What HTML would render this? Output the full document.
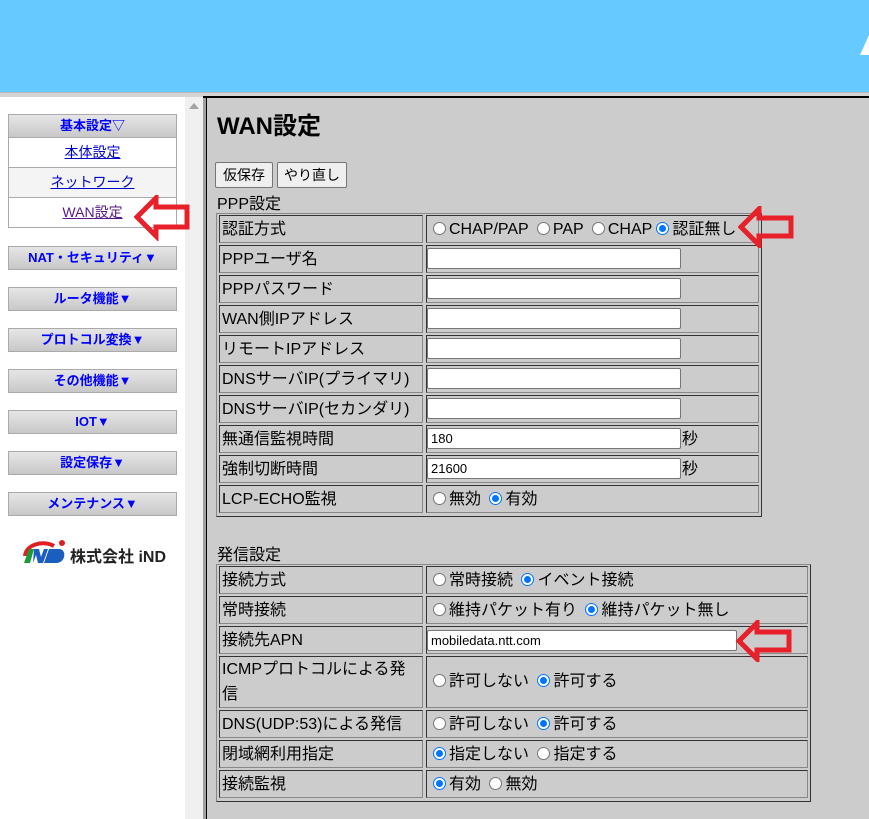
<!DOCTYPE html>
<html><head><meta charset="utf-8">
<style>
*{margin:0;padding:0;box-sizing:border-box}
body{width:869px;height:819px;overflow:hidden;position:relative;background:#ccc;font-family:"Liberation Sans","Noto Sans CJK JP",sans-serif;font-size:16px;color:#000}
.a{position:absolute}
#ban{left:0;top:0;width:869px;height:92px;background:#66c9ff}
#sep{left:0;top:92px;width:869px;height:5px;background:#d4d4d4;border-top:1px solid #bbb}
#left{left:0;top:97px;width:185px;height:722px;background:#fff}
#sb{left:185px;top:97px;width:18px;height:722px;background:#f0f0f0}
#fb{left:203px;top:97px;width:4px;height:722px;background:#a0a0a0;border-right:1px solid #000}
#topline{left:203px;top:96px;width:666px;height:2px;background:#000}
.mh{position:absolute;left:8px;width:169px;height:24px;background:linear-gradient(#e6e6e6,#c8c8c8);border:1px solid #aaa;color:#00f;font-weight:bold;font-size:13px;text-align:center;line-height:22px}
.mi{position:absolute;left:8px;width:169px;height:30px;border:1px solid #aaa;border-top:none;text-align:center;line-height:29px;font-size:14px;color:#00c;text-decoration:underline}
.cl,.cv{position:absolute;border:1px solid;border-color:#333 #888 #888 #333;height:28px;line-height:27px;padding-left:2px;white-space:nowrap}
.cl{left:219px;width:204px}
.cv{left:426px}
.tb{position:absolute;border:1px solid;border-color:#888 #333 #333 #888}
.r{display:inline-block;width:13px;height:13px;border-radius:50%;border:1px solid #767676;background:#fff;vertical-align:-1px;margin:0 3px 0 4px;position:relative}
.r.on{border:1px solid #0075ff;background:#fff}
.r.on:after{content:"";position:absolute;left:2px;top:2px;width:7px;height:7px;border-radius:50%;background:#0075ff}
.in{position:absolute;height:21px;background:#fff;border:1px solid #767676;border-radius:2px;font-size:13px;line-height:19px;padding-left:3px}
.btn{position:absolute;top:162px;height:26px;background:#efefef;border:1px solid #767676;border-radius:2px;font-size:14px;line-height:24px;text-align:center}
</style></head><body>
<div id="ban" class="a"></div>
<svg class="a" style="left:858px;top:35px" width="11" height="22"><polygon points="11,0 11,20 2,20" fill="#fff"/></svg>
<div id="sep" class="a"></div>
<div id="left" class="a"></div>
<div id="sb" class="a"></div>
<svg class="a" style="left:189px;top:103px" width="10" height="6"><polygon points="5,0 10,6 0,6" fill="#a3a3a3"/></svg>
<div id="fb" class="a"></div>
<div id="topline" class="a"></div>

<div class="mh" style="top:114px">基本設定▽</div>
<div class="mi" style="top:138px">本体設定</div>
<div class="mi" style="top:168px;background:#f4f4f4">ネットワーク</div>
<div class="mi" style="top:198px;color:#551a8b">WAN設定</div>
<div class="mh" style="top:246px">NAT・セキュリティ▼</div>
<div class="mh" style="top:287px">ルータ機能▼</div>
<div class="mh" style="top:328px">プロトコル変換▼</div>
<div class="mh" style="top:369px">その他機能▼</div>
<div class="mh" style="top:410px">IOT▼</div>
<div class="mh" style="top:451px">設定保存▼</div>
<div class="mh" style="top:492px">メンテナンス▼</div>

<svg class="a" style="left:22px;top:538px" width="46" height="26">
<path d="M3 18 C4 6 22 2 32 8" stroke="#e02020" stroke-width="4" fill="none"/>
<circle cx="40" cy="5" r="3" fill="#e02020"/>
<path d="M2 25 L7 11 L12 11 L8 25Z" fill="#1a9a3a"/>
<path d="M12 11 L17 11 L19 19 L22 11 L26 11 L21 25 L16 25 L14 17 L11 25Z" fill="#1a5ec0"/>
<path d="M27 11 L37 11 C45 11 44 25 34 25 L22 25Z" fill="#1a5ec0"/>
</svg>
<div class="a" style="left:70px;top:543px;font-size:16px;font-weight:bold;color:#222">株式会社 iND</div>

<svg class="a" style="left:134px;top:195px" width="58" height="46"><path d="M3 22 L22 3 L22 12 L53 12 L53 32 L22 32 L22 41Z" fill="none" stroke="#e8202a" stroke-width="5"/></svg>

<div class="a" style="left:217px;top:106px;font-size:24px;font-weight:bold">WAN設定</div>
<div class="btn" style="left:215px;width:58px">仮保存</div>
<div class="btn" style="left:277px;width:70px">やり直し</div>
<div class="a" style="left:217px;top:190px">PPP設定</div>

<div class="tb" style="left:216px;top:213px;width:546px;height:304px"></div>
<div class="cl" style="top:215px">認証方式</div><div class="cv" style="top:215px;width:333px"><span class="r"></span>CHAP/PAP <span class="r"></span>PAP <span class="r"></span>CHAP<span class="r on"></span>認証無し</div>
<div class="cl" style="top:245px">PPPユーザ名</div><div class="cv" style="top:245px;width:333px"></div><div class="in" style="left:427px;top:248px;width:254px"></div>
<div class="cl" style="top:275px">PPPパスワード</div><div class="cv" style="top:275px;width:333px"></div><div class="in" style="left:427px;top:278px;width:254px"></div>
<div class="cl" style="top:305px">WAN側IPアドレス</div><div class="cv" style="top:305px;width:333px"></div><div class="in" style="left:427px;top:308px;width:254px"></div>
<div class="cl" style="top:335px">リモートIPアドレス</div><div class="cv" style="top:335px;width:333px"></div><div class="in" style="left:427px;top:338px;width:254px"></div>
<div class="cl" style="top:365px">DNSサーバIP(プライマリ)</div><div class="cv" style="top:365px;width:333px"></div><div class="in" style="left:427px;top:368px;width:254px"></div>
<div class="cl" style="top:395px">DNSサーバIP(セカンダリ)</div><div class="cv" style="top:395px;width:333px"></div><div class="in" style="left:427px;top:398px;width:254px"></div>
<div class="cl" style="top:425px">無通信監視時間</div><div class="cv" style="top:425px;width:333px;padding-left:255px">秒</div><div class="in" style="left:427px;top:428px;width:254px">180</div>
<div class="cl" style="top:455px">強制切断時間</div><div class="cv" style="top:455px;width:333px;padding-left:255px">秒</div><div class="in" style="left:427px;top:458px;width:254px">21600</div>
<div class="cl" style="top:485px">LCP-ECHO監視</div><div class="cv" style="top:485px;width:333px"><span class="r"></span>無効 <span class="r on"></span>有効</div>

<svg class="a" style="left:738px;top:206px" width="58" height="42"><path d="M3 21 L21 3 L21 12 L53 12 L53 30 L21 30 L21 39Z" fill="none" stroke="#e8202a" stroke-width="5"/></svg>

<div class="a" style="left:217px;top:541px">発信設定</div>
<div class="tb" style="left:216px;top:564px;width:595px;height:238px"></div>
<div class="cl" style="top:566px">接続方式</div><div class="cv" style="top:566px;width:382px"><span class="r"></span>常時接続 <span class="r on"></span>イベント接続</div>
<div class="cl" style="top:596px">常時接続</div><div class="cv" style="top:596px;width:382px"><span class="r"></span>維持パケット有り <span class="r on"></span>維持パケット無し</div>
<div class="cl" style="top:626px">接続先APN</div><div class="cv" style="top:626px;width:382px"></div><div class="in" style="left:427px;top:630px;width:310px">mobiledata.ntt.com</div>
<div class="cl" style="top:656px;height:52px;line-height:25px">ICMPプロトコルによる発<br>信</div><div class="cv" style="top:656px;width:382px;height:52px;line-height:50px"><span class="r"></span>許可しない <span class="r on"></span>許可する</div>
<div class="cl" style="top:710px">DNS(UDP:53)による発信</div><div class="cv" style="top:710px;width:382px"><span class="r"></span>許可しない <span class="r on"></span>許可する</div>
<div class="cl" style="top:740px">閉域網利用指定</div><div class="cv" style="top:740px;width:382px"><span class="r on"></span>指定しない <span class="r"></span>指定する</div>
<div class="cl" style="top:770px">接続監視</div><div class="cv" style="top:770px;width:382px"><span class="r on"></span>有効 <span class="r"></span>無効</div>

<svg class="a" style="left:736px;top:620px" width="58" height="42"><path d="M3 21 L21 3 L21 12 L53 12 L53 30 L21 30 L21 39Z" fill="none" stroke="#e8202a" stroke-width="5"/></svg>
</body></html>
